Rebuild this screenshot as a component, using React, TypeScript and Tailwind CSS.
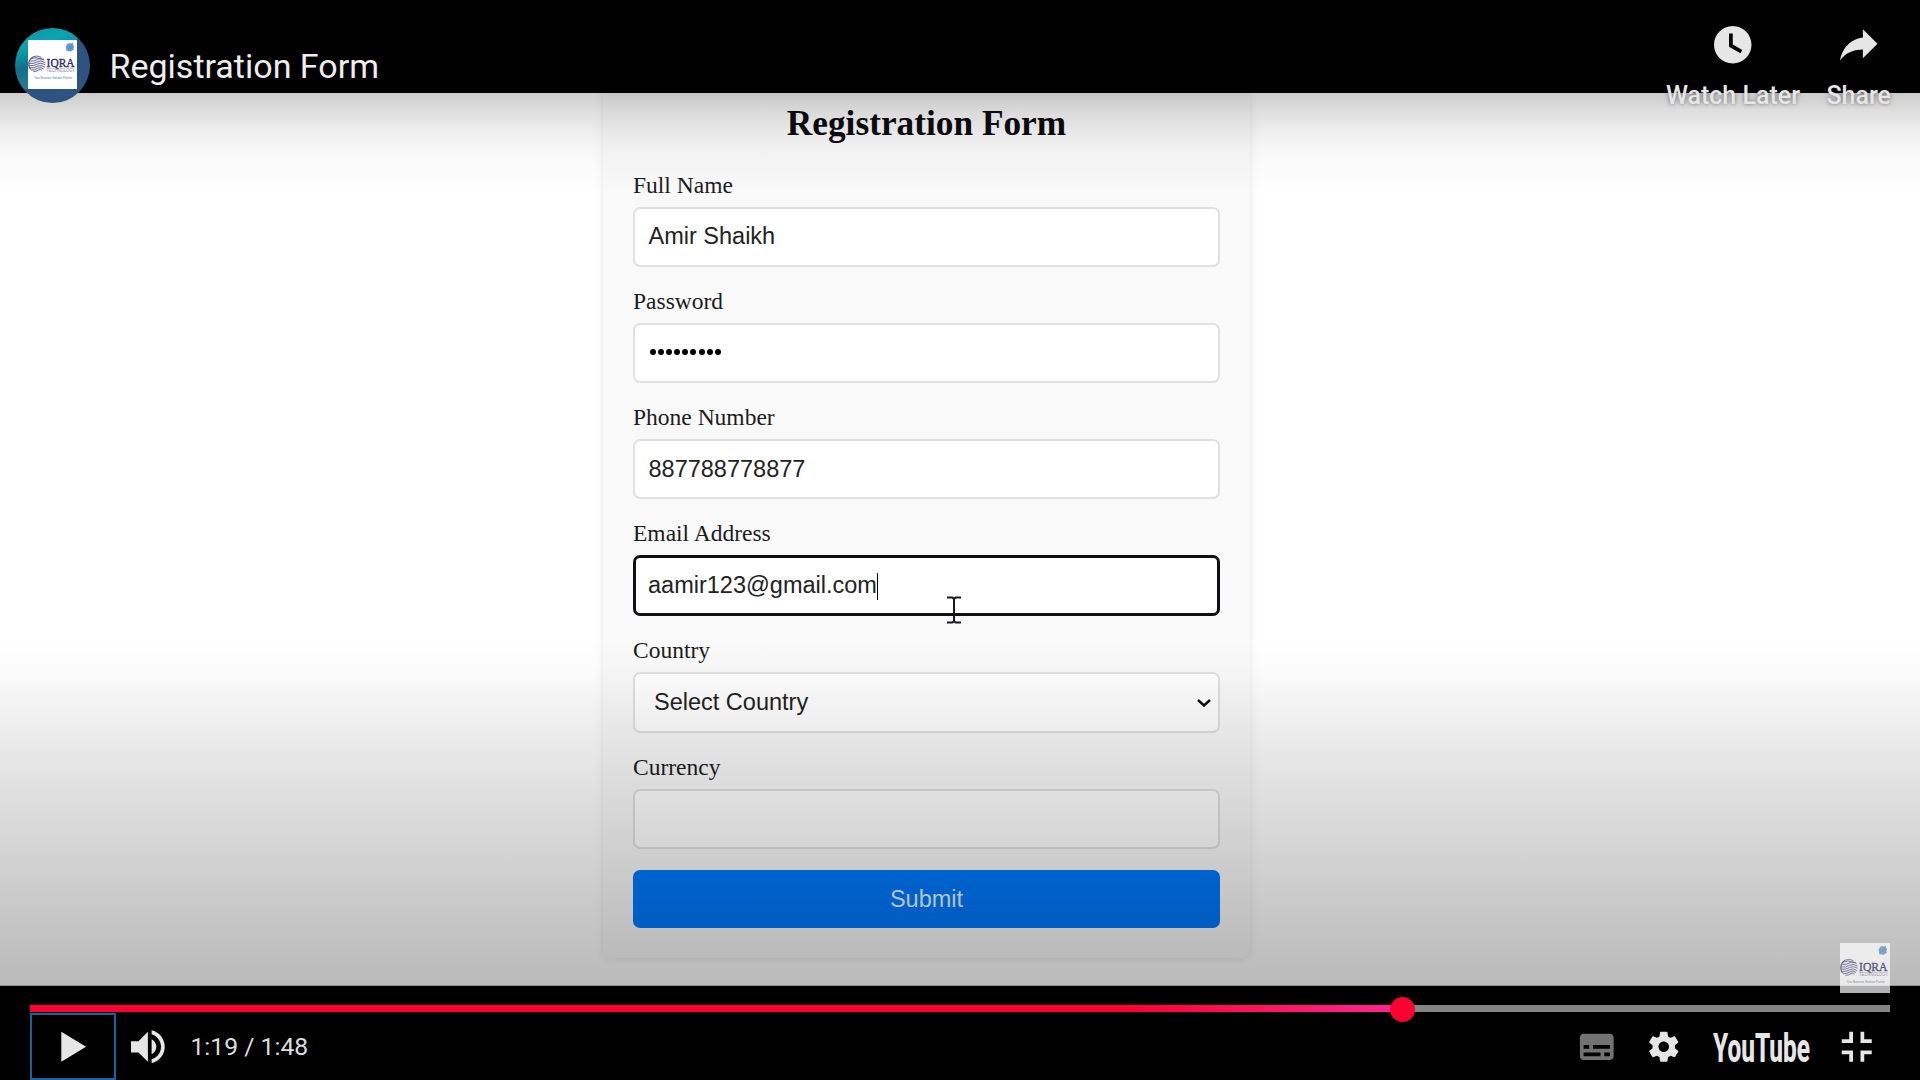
import type { ReactNode } from "react";

function Logo({ className }: { className: string }) {
  return (
    <svg viewBox="0 0 50 50" className={`shrink-0 overflow-visible ${className}`} aria-label="IQRA Technology">
      <rect width="50" height="50" fill="#ffffff" />
      <path d="M40 4l2-1 2 .6 1.6-1L46 4.5l1 1.5-.6 2 .4 2-2 1-1.5 1-2-.8-2 .4L39 9l-.6-2z" fill="#6b9dcb" />
      <path d="M40.500 9.500l5-5M42 6.500l2 3M44.500 6.500l1.500 1.500" stroke="#3f78b0" strokeWidth=".6" fill="none" />
      <circle cx="9.200" cy="24.600" r="8.600" fill="#efeff6" />
      <g fill="none" stroke="#4a4878" strokeWidth=".8">
        <path d="M5 17.200q4-2 8.500.4M3 19.200q5-2.600 11 .4q1 .4 2-.2M1.600 21.400q5 .8 8-1.600t7 .6M.8 23.800q5 1 8.400-1.400t8.400.6M.8 26.200q5 .6 8.600-1.600t8.200 .6M1.600 28.600q4.600 .2 8-1.800t7.400.8M3 30.800q4 0 7-2t6 .8M5.400 32.400q3-.2 5.400-1.800t3.800.6" />
        <path d="M2.600 30A8.600 8.600 0 0 1 5 17.200" strokeWidth="1.100" />
      </g>
      <text x="19" y="28" textLength="28.500" lengthAdjust="spacingAndGlyphs" fontSize="13" fill="#2c2963" stroke="#2c2963" strokeWidth=".35" fontFamily="Liberation Serif, serif">IQRA</text>
      <text x="19" y="33" textLength="29" lengthAdjust="spacingAndGlyphs" fontSize="5.800" fill="#83838f" fontFamily="Liberation Sans, sans-serif">TECHNOLOGY</text>
      <text x="6.500" y="39.500" textLength="38.500" lengthAdjust="spacingAndGlyphs" fontSize="3.600" fill="#55788c" fontFamily="Liberation Sans, sans-serif">Your Business Solution Partner</text>
    </svg>
  );
}

function Icon({ d, className = "" }: { d: string; className?: string }) {
  return (
    <svg viewBox="0 0 36 36" className={`size-[67.5px] shrink-0 ${className}`} fill="#e6e6e6" fillRule="evenodd">
      <path d={d} />
    </svg>
  );
}

const icons = {
  later:
    "M18,8 C12.47,8 8,12.47 8,18 C8,23.52 12.47,28 18,28 C23.52,28 28,23.52 28,18 C28,12.47 23.52,8 18,8 Z M16,19.02 L16,12 L18,12 L18,17.86 L23.1,20.81 L22.1,22.54 Z",
  share:
    "m 20.20,14.19 0,-4.45 7.79,7.79 -7.79,7.62 0,-4.56 C 16.27,20.69 12.10,21.81 9.34,24.76 8.80,25.13 7.60,27.29 8.12,25.65 9.08,21.32 11.80,17.18 15.98,15.38 c 1.33,-0.60 2.76,-0.98 4.21,-1.19 z",
  play: "M 11.900,10 25.100,18 11.900,26 z",
  volume:
    "M8,21 L12,21 L17,26 L17,10 L12,15 L8,15 Z M19,14 L19,22 C20.48,21.32 21.5,19.77 21.5,18 C21.5,16.26 20.48,14.74 19,14 Z M19,11.29 C21.89,12.15 24,14.83 24,18 C24,21.17 21.89,23.85 19,24.71 L19,26.77 C23.01,25.86 26,22.28 26,18 C26,13.72 23.01,10.14 19,9.23 Z",
  subtitles:
    "M11,11 C9.89,11 9,11.9 9,13 L9,23 C9,24.1 9.89,25 11,25 L25,25 C26.1,25 27,24.1 27,23 L27,13 C27,11.9 26.1,11 25,11 Z M11,17 L14,17 L14,19 L11,19 Z M20,23 L11,23 L11,21 L20,21 Z M25,23 L22,23 L22,21 L25,21 Z M25,19 L16,19 L16,17 L25,17 Z",
  settings:
    "m 23.94,18.78 c .03,-0.25 .05,-0.51 .05,-0.78 0,-0.27 -0.02,-0.52 -0.05,-0.78 l 1.68,-1.32 c .15,-0.12 .19,-0.33 .09,-0.51 l -1.6,-2.76 c -0.09,-0.17 -0.31,-0.24 -0.48,-0.17 l -1.99,.8 c -0.41,-0.32 -0.86,-0.58 -1.35,-0.78 l -0.30,-2.12 c -0.02,-0.19 -0.19,-0.33 -0.39,-0.33 l -3.2,0 c -0.2,0 -0.36,.14 -0.39,.33 l -0.30,2.12 c -0.48,.2 -0.93,.47 -1.35,.78 l -1.99,-0.8 c -0.18,-0.07 -0.39,0 -0.48,.17 l -1.6,2.76 c -0.10,.17 -0.05,.39 .09,.51 l 1.68,1.32 c -0.03,.25 -0.05,.52 -0.05,.78 0,.26 .02,.52 .05,.78 l -1.68,1.32 c -0.15,.12 -0.19,.33 -0.09,.51 l 1.6,2.76 c .09,.17 .31,.24 .48,.17 l 1.99,-0.8 c .41,.32 .86,.58 1.35,.78 l .30,2.12 c .02,.19 .19,.33 .39,.33 l 3.2,0 c .2,0 .36,-0.14 .39,-0.33 l .30,-2.12 c .48,-0.2 .93,-0.47 1.35,-0.78 l 1.99,.8 c .18,.07 .39,0 .48,-0.17 l 1.6,-2.76 c .09,-0.17 .05,-0.39 -0.09,-0.51 l -1.68,-1.32 z m -5.94,2.01 c -1.54,0 -2.8,-1.25 -2.8,-2.8 0,-1.54 1.25,-2.8 2.8,-2.8 1.54,0 2.8,1.25 2.8,2.8 0,1.54 -1.25,2.8 -2.8,2.8 z",
  exitFullscreen:
    "m 14,14 -4,0 0,2 6,0 0,-6 -2,0 z M 22,14 l 0,-4 -2,0 0,6 6,0 0,-2 z M 20,26 l 2,0 0,-4 4,0 0,-2 -6,0 z M 10,22 l 4,0 0,4 2,0 0,-6 -6,0 z",
};

function Field({
  label,
  children,
  box = "h-[60px] border-[2px] border-[#e0e0e0] px-[13.5px]",
}: {
  label: string;
  children?: ReactNode;
  box?: string;
}) {
  return (
    <div className="flex flex-col">
      <span className="h-[31px] font-['Liberation_Serif',serif] text-[23.5px] leading-[31px] text-[#1c1c1f]">{label}</span>
      <div className={`mt-[6.3px] flex items-center rounded-[7px] bg-white font-['Liberation_Sans',sans-serif] text-[23.5px] text-[#222] ${box}`}>
        {children}
      </div>
    </div>
  );
}

function FormCard() {
  return (
    <div className="ml-[603px] flex h-[865px] w-[647px] flex-col rounded-b-[8px] bg-[#f9f9f9] px-[30px] shadow-[0_1px_8px_rgba(0,0,0,0.1)]">
      <h1 className="mt-[11px] h-[40px] text-center font-['Liberation_Serif',serif] text-[35.3px] leading-[40px] font-bold text-[#0c0c10]">
        Registration Form
      </h1>
      <div className="mt-[25.7px] flex flex-col gap-[18.800px]">
        <Field label="Full Name">Amir Shaikh</Field>
        <Field label="Password">
          <span className="mb-[2px] flex gap-[2.2px] pl-[1px]">
            {Array.from({ length: 9 }, (_, i) => (
              <span key={i} className="size-[6px] rounded-full bg-black" />
            ))}
          </span>
        </Field>
        <Field label="Phone Number">887788778877</Field>
        <Field label="Email Address" box="h-[60.5px] border-[3px] border-[#101014] px-[12px] pt-[1px]">
          aamir123@gmail.com
          <span className="h-[27px] w-px bg-black" />
        </Field>
        <Field label="Country" box="h-[61px] border-[2px] border-[#e0e0e0] px-[14px] pt-[1px]">
          <span className="flex w-full items-center justify-between pl-[5px]">
            Select Country
            <svg viewBox="0 0 14 10" className="mr-[-7px] h-[10px] w-[14px]" fill="none" stroke="#111" strokeWidth="2.400">
              <path d="M1 2l6 5.500L13 2" />
            </svg>
          </span>
        </Field>
        <Field label="Currency" />
      </div>
      <div className="mt-[21px] flex h-[58px] items-center justify-center rounded-[7px] bg-[#0078fc] pt-[2px] font-['Liberation_Sans',sans-serif] text-[23.5px] text-[#def6f4]">
        Submit
      </div>
    </div>
  );
}

function TopAction({ icon, label, className = "" }: { icon: string; label: string; className?: string }) {
  return (
    <div className={`flex flex-col items-center ${className}`}>
      <Icon d={icon} />
      <span className="mt-[1px] h-[32px] text-[25px] leading-[32px] font-medium whitespace-nowrap text-[#e6e6e6] [text-shadow:0_0_4px_rgba(0,0,0,0.5)]">
        {label}
      </span>
    </div>
  );
}

export default function App() {
  return (
    <main className="grid h-[1080px] w-[1920px] overflow-hidden bg-black font-[Roboto,sans-serif] [&>*]:[grid-area:1/1]">
      <section className="mt-[93px] h-[893px] overflow-hidden border-b border-[#c5cac6] bg-white">
        <FormCard />
      </section>

      <div className="mt-[93px] flex h-[893px] flex-col justify-between">
        <div className="h-[100px] bg-[linear-gradient(to_bottom,rgba(0,0,0,0.2)_0%,rgba(0,0,0,0.12)_20%,rgba(0,0,0,0.06)_42%,rgba(0,0,0,0.025)_63%,rgba(0,0,0,0)_100%)]" />
        <div className="h-[346px] bg-[linear-gradient(to_bottom,rgba(0,0,0,0)_0%,rgba(0,0,0,0.012)_8%,rgba(0,0,0,0.055)_20%,rgba(0,0,0,0.105)_37%,rgba(0,0,0,0.18)_65%,rgba(0,0,0,0.235)_85%,rgba(0,0,0,0.27)_100%)]" />
      </div>

      <div className="flex h-[1080px] flex-col justify-between">
        <header className="flex h-[120px] items-start justify-between pr-[27.5px] pl-[15px]">
          <div className="mt-[28px] flex items-start">
            <div className="flex size-[75px] justify-center rounded-full bg-[linear-gradient(to_right,transparent_83%,#2f5380_83%),linear-gradient(to_bottom,transparent_82%,#2f5380_82%),linear-gradient(165deg,#12929f_0%,#0aa5b2_22%,#11708c_45%,#2a7c8c_68%,#6d927f_85%)]">
              <Logo className="mt-[12px] size-[49px]" />
            </div>
            <span className="ml-[19.500px] h-[44px] pt-[16px] text-[34px] leading-[44px] whitespace-nowrap text-[#eee]">Registration Form</span>
          </div>
          <div className="flex pt-[11px]">
            <TopAction icon={icons.later} label="Watch Later" className="mr-[25px]" />
            <TopAction icon={icons.share} label="Share" />
          </div>
        </header>

        <footer className="flex h-[137px] flex-col px-[30px]">
          <div className="flex h-[50px] justify-end">
            <Logo className="size-[50px] opacity-70" />
          </div>
          <div className="mt-[12px] flex h-[7px] items-center bg-[#858585]">
            <div className="h-[7px] w-[1372px] bg-[linear-gradient(to_right,#ff0033_80%,#ff2791_100%)]" />
            <div className="relative ml-[-12px] size-[25px] shrink-0 translate-y-[1px] rounded-full bg-[#ff0033]" />
          </div>
          <div className="mt-[1px] flex h-[67px] items-center justify-between">
            <div className="flex items-center">
              <div className="flex h-[67px] w-[86px] items-center justify-center border-2 border-[#1b609f]">
                <Icon d={icons.play} />
              </div>
              <Icon d={icons.volume} />
              <span className="ml-[7px] text-[24.7px] whitespace-nowrap text-[#ddd]">1:19 / 1:48</span>
            </div>
            <div className="flex items-center">
              <Icon d={icons.subtitles} className="opacity-50" />
              <Icon d={icons.settings} />
              <svg viewBox="0 0 125 67" className="h-[67px] w-[125px] overflow-visible">
                <text x="15" y="48.500" textLength="97" lengthAdjust="spacingAndGlyphs" fontFamily="Roboto, sans-serif" fontWeight="800" fontSize="41" fill="#e6e6e6">YouTube</text>
              </svg>
              <Icon d={icons.exitFullscreen} />
            </div>
          </div>
        </footer>
      </div>

      <svg viewBox="0 0 16 28" className="mt-[596px] ml-[946px] h-[28px] w-[16px]" fill="none" stroke="#18181c" strokeWidth="2">
        <path d="M1 1.500H6.500L8 3L9.500 1.500H15M8 3V25M1 26.500H6.500L8 25L9.500 26.500H15" />
      </svg>
    </main>
  );
}
